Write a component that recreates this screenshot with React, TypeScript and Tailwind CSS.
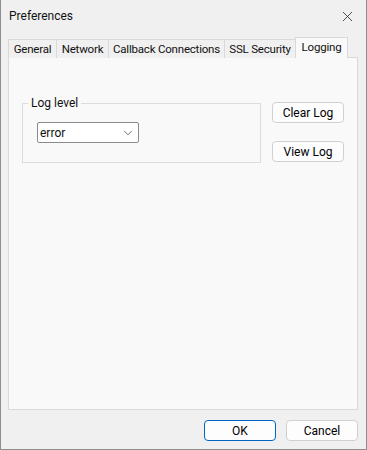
import { X, ChevronDown } from "lucide-react";

const tabs = [
    { label: "General", w: "w-[49px]" },
    { label: "Network", w: "w-[52px]" },
    { label: "Callback Connections", w: "w-[116px]" },
    { label: "SSL Security", w: "w-[71px]" },
];

function Button({ children, primary }: { children: React.ReactNode; primary?: boolean }) {
    return (
        <button
            className={
                "w-[72px] h-[21px] rounded-[4px] bg-[#fdfdfd] text-[12px] leading-none text-black flex items-center justify-center " +
                (primary ? "border border-[#0067c0]" : "border border-[#d0d0d0]")
            }
        >
            {children}
        </button>
    );
}

export default function App() {
    return (
        <div
            className="w-[367px] h-[450px] bg-[#f0f0f0] border-x border-b border-[#8e8e8e] flex flex-col text-[12px] text-[#111] whitespace-nowrap"
            style={{ fontFamily: "Roboto, 'Liberation Sans', sans-serif" }}
        >
            {/* title bar */}
            <div className="h-[32px] flex items-center justify-between pl-[8px] pr-[10px]">
                <span className="text-[12px]">Preferences</span>
                <X size={17} strokeWidth={1.1} className="text-[#222]" />
            </div>

            {/* tabs */}
            <div className="pl-[7px] pt-[6px] h-[26px] flex items-end relative z-10 -mb-px text-[11.5px] tracking-[-0.2px]">
                {tabs.map((t, i) => (
                    <div
                        key={t.label}
                        className={
                            "h-[19px] pt-[2px] border-t border-r border-[#d9d9d9] bg-[#f0f0f0] flex items-center justify-center " +
                            t.w +
                            (i === 0 ? " border-l" : "")
                        }
                    >
                        {t.label}
                    </div>
                ))}
                <div className="w-[53px] h-[21px] border-t border-x border-[#d9d9d9] bg-[#f9f9f9] flex items-start justify-center pt-[1px] -ml-px">
                    Logging
                </div>
            </div>

            {/* panel */}
            <div className="ml-[7px] mr-[8px] h-[353px] bg-[#f9f9f9] border border-[#d9d9d9] flex items-start pl-[13px] pt-[37px]">
                <fieldset className="w-[239px] border border-[#dcdcdc] pl-[14px] pt-[11px] pb-[19px]">
                    <legend className="-ml-[9px] px-[3px] leading-[16px]">Log level</legend>
                    <div className="w-[102px] h-[21px] bg-white border border-[#8a8a8a] rounded-[2px] flex items-center justify-between pl-[2px] pr-[3px]">
                        <span>error</span>
                        <ChevronDown size={14} strokeWidth={1.2} className="text-[#333]" />
                    </div>
                </fieldset>
                <div className="ml-[11px] mt-[7px] flex flex-col gap-[18px]">
                    <Button>Clear Log</Button>
                    <Button>View Log</Button>
                </div>
            </div>

            {/* footer */}
            <div className="flex-1 flex items-start justify-end gap-[10px] pr-[8px] pt-[10px]">
                <Button primary>OK</Button>
                <Button>Cancel</Button>
            </div>
        </div>
    );
}
